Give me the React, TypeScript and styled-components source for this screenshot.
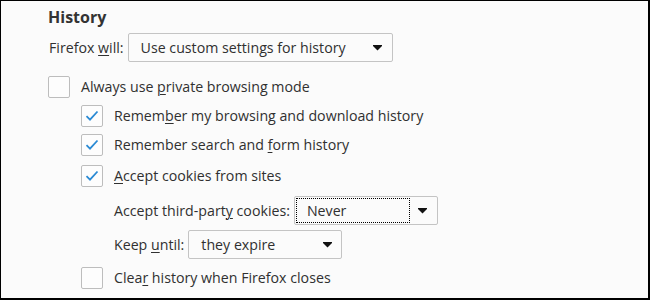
import styled, { createGlobalStyle } from "styled-components";

const GlobalStyle = createGlobalStyle`
  html, body {
    margin: 0;
    padding: 0;
    background: #fbfbfb;
  }
  * {
    box-sizing: border-box;
  }
`;

const Frame = styled.div`
  width: 650px;
  height: 300px;
  background: #fbfbfb;
  border-style: solid;
  border-color: #000;
  border-width: 1px 2px 2px 1px;
  padding: 4px 0 0 46px;
  display: flex;
  flex-direction: column;
  font-family: "Open Sans", "Noto Sans", sans-serif;
  font-size: 14.2px;
  color: #303030;
`;

const Heading = styled.h2`
  margin: 0;
  height: 24px;
  line-height: 24px;
  font-size: 16px;
  font-weight: 700;
  color: #333;
  padding-left: 1px;
`;

const Row = styled.div<{ $top: number; $indent: number }>`
  display: flex;
  align-items: center;
  gap: 4px;
  margin-top: ${(p) => p.$top}px;
  padding-left: ${(p) => p.$indent}px;
`;

const CheckRow = styled.label<{ $top: number; $indent: number }>`
  display: flex;
  align-items: center;
  gap: 11px;
  height: 22px;
  margin-top: ${(p) => p.$top}px;
  padding-left: ${(p) => p.$indent}px;
`;

const Box = styled.span`
  width: 22px;
  height: 22px;
  flex: none;
  border: 1px solid #bdbdbd;
  border-radius: 2px;
  background: #fdfdfd;
  display: flex;
  align-items: center;
  justify-content: center;
`;

const Label = styled.span`
  white-space: nowrap;
  line-height: 20px;
`;

const Key = styled.u`
  text-decoration-thickness: 1px;
  text-underline-offset: 2px;
`;

const Select = styled.div<{ $width: number }>`
  width: ${(p) => p.$width}px;
  height: 29px;
  border: 1px solid #c4c4c4;
  border-radius: 2px;
  background: #fbfbfb;
  display: flex;
  align-items: stretch;
  padding: 1px;
`;

const Value = styled.span<{ $focused?: boolean }>`
  flex: 1;
  display: flex;
  align-items: center;
  padding-left: 10px;
  white-space: nowrap;
  border: 1px dotted ${(p) => (p.$focused ? "#000" : "transparent")};
`;

const Arrow = styled.span`
  width: 26px;
  flex: none;
  display: flex;
  align-items: center;
  justify-content: center;
`;

function Check() {
  return (
    <svg width="14" height="12" viewBox="0 0 14 12">
      <path d="M1.5 6.2 L5 9.6 L12.5 1.5" fill="none" stroke="#2a8ad4" strokeWidth="1.8" />
    </svg>
  );
}

function Caret() {
  return (
    <svg width="9" height="6" viewBox="0 0 9 6">
      <path d="M0 0 H9 V1 L4.5 5.5 L0 1 Z" fill="#111" />
    </svg>
  );
}

function Checkbox({
  checked,
  top,
  indent,
  children,
}: {
  checked?: boolean;
  top: number;
  indent: number;
  children: React.ReactNode;
}) {
  return (
    <CheckRow $top={top} $indent={indent}>
      <Box>{checked ? <Check /> : null}</Box>
      <Label>{children}</Label>
    </CheckRow>
  );
}

function Dropdown({
  width,
  value,
  focused,
}: {
  width: number;
  value: string;
  focused?: boolean;
}) {
  return (
    <Select $width={width}>
      <Value $focused={focused}>{value}</Value>
      <Arrow>
        <Caret />
      </Arrow>
    </Select>
  );
}

export default function App() {
  return (
    <>
      <GlobalStyle />
      <Frame>
        <Heading>History</Heading>
        <Row $top={4} $indent={2}>
          <Label>
            Firefox <Key>w</Key>ill:
          </Label>
          <Dropdown width={265} value="Use custom settings for history" />
        </Row>
        <Checkbox top={14} indent={1}>
          Always use <Key>p</Key>rivate browsing mode
        </Checkbox>
        <Checkbox checked top={7} indent={34}>
          Remem<Key>b</Key>er my browsing and download history
        </Checkbox>
        <Checkbox checked top={7} indent={34}>
          Remember search and <Key>f</Key>orm history
        </Checkbox>
        <Checkbox checked top={9} indent={34}>
          <Key>A</Key>ccept cookies from sites
        </Checkbox>
        <Row $top={9} $indent={67}>
          <Label>
            Accept third-part<Key>y</Key> cookies:
          </Label>
          <Dropdown width={144} value="Never" focused />
        </Row>
        <Row $top={5} $indent={67}>
          <Label>
            Keep <Key>u</Key>ntil:
          </Label>
          <Dropdown width={154} value="they expire" />
        </Row>
        <Checkbox top={8} indent={34}>
          Clea<Key>r</Key> history when Firefox closes
        </Checkbox>
      </Frame>
    </>
  );
}
